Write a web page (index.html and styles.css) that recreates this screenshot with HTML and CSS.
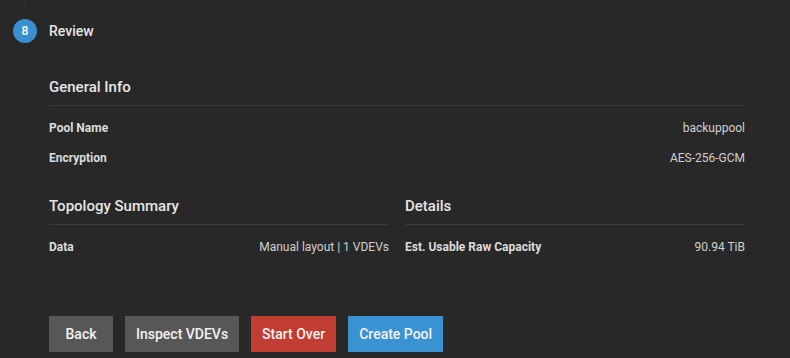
FILE: index.html
```html
<!DOCTYPE html>
<html>
<head>
    <meta charset="UTF-8">
    <title>Pool Creation Wizard - Review</title>
    <link rel="stylesheet" href="styles.css">
</head>
<body>
    <div class="stepper">
        <div class="step-line"></div>
        <div class="step-head">
            <span class="step-num">8</span>
            <span class="step-title">Review</span>
        </div>

        <div class="step-body">
            <div class="section">
                <h3 class="section-title">General Info</h3>
                <div class="row">
                    <span class="label">Pool Name</span>
                    <span class="value">backuppool</span>
                </div>
                <div class="row">
                    <span class="label">Encryption</span>
                    <span class="value">AES-256-GCM</span>
                </div>
            </div>

            <div class="columns">
                <div class="section">
                    <h3 class="section-title">Topology Summary</h3>
                    <div class="row">
                        <span class="label">Data</span>
                        <span class="value">Manual layout | 1 VDEVs</span>
                    </div>
                </div>
                <div class="section">
                    <h3 class="section-title">Details</h3>
                    <div class="row">
                        <span class="label">Est. Usable Raw Capacity</span>
                        <span class="value">90.94 TiB</span>
                    </div>
                </div>
            </div>

            <div class="actions">
                <button class="btn btn-default" type="button">Back</button>
                <button class="btn btn-default" type="button">Inspect VDEVs</button>
                <button class="btn btn-warn" type="button">Start Over</button>
                <button class="btn btn-primary" type="submit">Create Pool</button>
            </div>
        </div>
    </div>
</body>
</html>
```

FILE: styles.css
```css
body {
    margin: 0;
    background-color: #282828;
    color: #e0e0e0;
    font-family: Roboto, "Liberation Sans", sans-serif;
}
.stepper {
    height: 358px;
    overflow: hidden;
    padding-top: 19px;
    box-sizing: border-box;
}
.step-line {
    width: 1px;
    height: 12px;
    margin: -19px 0 7px 25px;
    background-color: #333333;
}
.step-head {
    display: flex;
    align-items: center;
    gap: 12px;
    padding-left: 13px;
    height: 24px;
}
.step-num {
    width: 24px;
    height: 24px;
    border-radius: 50%;
    background-color: #3b8fd1;
    color: #fff;
    font-size: 12px;
    font-weight: 500;
    display: flex;
    align-items: center;
    justify-content: center;
}
.step-title {
    font-size: 14px;
    font-weight: 500;
    color: #e6e6e6;
}
.step-body {
    padding: 0 45px 0 49px;
}
.section-title {
    margin: 0;
    font-size: 15px;
    font-weight: 500;
    line-height: 20px;
    padding-bottom: 8px;
    border-bottom: 1px solid #3a3a3a;
    color: #e6e6e6;
}
.step-body > .section .section-title {
    margin-top: 34px;
}
.row {
    display: flex;
    justify-content: space-between;
    line-height: 20px;
    font-size: 12px;
    margin-top: 10px;
}
.section-title + .row {
    margin-top: 12px;
}
.label {
    font-weight: 700;
    color: #dcdcdc;
}
.value {
    color: #d0d0d0;
}
.columns {
    display: grid;
    grid-template-columns: 1fr 1fr;
    gap: 16px;
    margin-top: 28px;
}
.columns .section-title + .row {
    margin-top: 12px;
}
.actions {
    display: flex;
    gap: 12px;
    margin-top: 59px;
}
.btn {
    height: 36px;
    min-width: 64px;
    padding: 0 11px;
    border: none;
    border-radius: 0;
    font-family: Roboto, "Liberation Sans", sans-serif;
    font-size: 14px;
    font-weight: 500;
    color: #f2f2f2;
    cursor: pointer;
}
.btn-default {
    background-color: #575757;
}
.btn-warn {
    background-color: #c13c31;
}
.btn-primary {
    background-color: #3993d3;
}
```
